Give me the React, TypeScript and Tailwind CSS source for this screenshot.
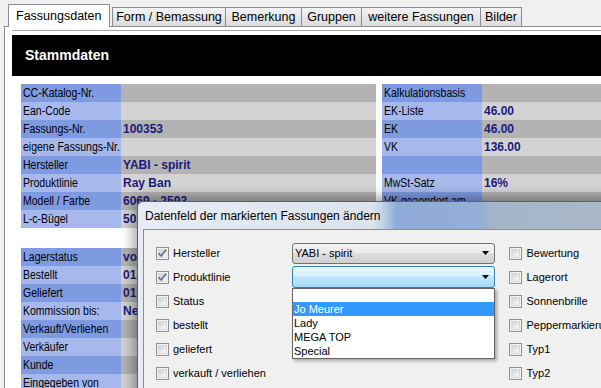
import React from "react";

const tabs = [
  { label: "Form / Bemassung", w: "w-[114px]" },
  { label: "Bemerkung", w: "w-[76px]" },
  { label: "Gruppen", w: "w-[60px]" },
  { label: "weitere Fassungen", w: "w-[119px]" },
  { label: "Bilder", w: "w-[41px]" },
];

const stamm = [
  ["CC-Katalog-Nr.", ""],
  ["Ean-Code", ""],
  ["Fassungs-Nr.", "100353"],
  ["eigene Fassungs-Nr.", ""],
  ["Hersteller", "YABI - spirit"],
  ["Produktlinie", "Ray Ban"],
  ["Modell / Farbe", "6069 - 2593"],
  ["L-c-Bügel", "50 - 20 - 140"],
];

const lager = [
  ["Lagerstatus", "vorrätig"],
  ["Bestellt", "01.10.2007"],
  ["Geliefert", "01.10.2007"],
  ["Kommission bis:", "Nein"],
  ["Verkauft/Verliehen", ""],
  ["Verkäufer", ""],
  ["Kunde", ""],
  ["Eingegeben von", ""],
];

const kalk = [
  ["Kalkulationsbasis", ""],
  ["EK-Liste", "46.00"],
  ["EK", "46.00"],
  ["VK", "136.00"],
  ["", ""],
  ["MwSt-Satz", "16%"],
  ["VK geaendert am", ""],
  ["", ""],
];

function Row({ label, value, dark }: { label: string; value: string; dark: boolean }) {
  return (
    <div className="flex h-[18px]">
      <div
        className={`w-[100px] shrink-0 pl-[2px] flex items-center whitespace-nowrap text-[12.5px] text-black ${
          dark ? "bg-[#7e9ae1]" : "bg-[#a7b9ec]"
        }`}
      >
        <span className="inline-block origin-left scale-x-[0.84]">{label}</span>
      </div>
      <div
        className={`flex-1 pl-[2px] flex items-center whitespace-nowrap overflow-hidden text-[12px] font-bold text-[#1a1a80] ${
          dark ? "bg-[#b3b3b3]" : "bg-[#d3d3d3]"
        }`}
      >
        {value}
      </div>
    </div>
  );
}

function Table({ rows, className }: { rows: string[][]; className: string }) {
  return (
    <div className={className}>
      {rows.map(([l, v], i) => (
        <Row key={i} label={l} value={v} dark={i % 2 === 0} />
      ))}
    </div>
  );
}

function Check({ checked }: { checked?: boolean }) {
  return (
    <span className="w-[13px] h-[13px] shrink-0 border border-[#8e8f8f] bg-[#f4f4f4] flex items-center justify-center">
      <span className="w-[9px] h-[9px] bg-gradient-to-br from-[#d2d2d2] to-[#fafafa] border border-[#d8d8d8] flex items-center justify-center">
        {checked && (
          <svg width="9" height="9" viewBox="0 0 9 9" className="overflow-visible">
            <path d="M0.5 4.2 L3.2 7 L8 0.8" fill="none" stroke="#5a6c9c" strokeWidth="1.6" />
          </svg>
        )}
      </span>
    </span>
  );
}

function Arrow() {
  return (
    <svg width="7" height="4" viewBox="0 0 7 4">
      <path d="M0 0 H7 L3.5 4 Z" fill="#000" />
    </svg>
  );
}

export default function App() {
  return (
    <div className="w-[601px] h-[388px] overflow-hidden relative bg-[#f0f0f0] flex flex-col font-['Liberation_Sans',Arial,sans-serif] text-black">
      {/* Tabs */}
      <div className="h-[26px] shrink-0 flex items-end pl-[8px]">
        <div className="relative z-10 mb-[-1px] h-[23px] w-[102px] bg-white border border-b-0 border-[#898c95] flex items-center pl-[7px] text-[12.5px]">
          Fassungsdaten
        </div>
        {tabs.map((t, i) => (
          <div
            key={t.label}
            className={`${t.w} h-[19px] border-t border-r border-[#898c95] bg-gradient-to-b from-[#f3f3f3] to-[#dcdcdc] flex items-center justify-center text-[12.5px] ${
              i === 0 ? "border-l ml-[2px]" : ""
            }`}
          >
            {t.label}
          </div>
        ))}
      </div>

      {/* Panel */}
      <div className="flex-1 ml-[4px] border-t border-l border-[#898c95] bg-white">
        <div className="mt-[3px] ml-[7px] border-t border-[#a3a3a3] pt-[4px]">
          <div className="h-[41px] bg-black flex items-center pl-[13px] text-white font-bold text-[14px]">
            Stammdaten
          </div>
          <div className="mt-[8px] pl-[9px] flex gap-[6px]">
            <div className="w-[355px] flex flex-col gap-[20px]">
              <Table rows={stamm} className="flex flex-col" />
              <Table rows={lager} className="flex flex-col" />
            </div>
            <Table rows={kalk} className="flex-1 flex flex-col" />
          </div>
        </div>
      </div>

      {/* Dialog */}
      <div className="absolute left-[137px] top-[201px] w-[480px] h-[200px] rounded-tl-[6px] border-t border-l border-[#59636e] shadow-[0_0_14px_3px_rgba(0,0,0,0.4)] bg-[linear-gradient(to_right,#e6ecf2_0%,#dbe3ec_49%,#c4d4e6_51%,#8eaad9_54%,#93aed7_71%,#a3b5c9_74%,#aab9c9_100%)] flex flex-col">
        <div className="h-[27px] shrink-0 flex items-center pl-[7px] text-[12px]">
          Datenfeld der markierten Fassungen ändern
        </div>
        <div className="flex-1 ml-[5px] border-t border-l border-[#8d8d8d] bg-[#f0f0f0] text-[11px]">
          <div className="pl-[12px] pt-[11px] flex">
            <div className="w-[139px] flex flex-col">
              {[
                ["Hersteller", true],
                ["Produktlinie", true],
                ["Status", false],
                ["bestellt", false],
                ["geliefert", false],
                ["verkauft / verliehen", false],
              ].map(([l, c]) => (
                <div key={l as string} className="h-[24px] flex items-center gap-[4px] whitespace-nowrap">
                  <Check checked={c as boolean} />
                  <span>{l as string}</span>
                </div>
              ))}
            </div>
            <div className="w-[207px] flex flex-col">
              <div className="h-[24px] flex items-center">
                <div className="w-full h-[21px] rounded-[3px] border border-[#707070] bg-[linear-gradient(to_bottom,#f2f2f2_0%,#ebebeb_45%,#dddddd_50%,#cfcfcf_100%)] flex items-center justify-between pl-[2px] pr-[5px]">
                  <span>YABI - spirit</span>
                  <Arrow />
                </div>
              </div>
              <div className="h-[24px] flex items-center relative">
                <div className="w-full h-[22px] rounded-[3px] border border-[#3c7fb1] bg-[linear-gradient(to_bottom,#eaf6fd_0%,#d9f0fc_45%,#bee6fd_50%,#a7d9f5_100%)] flex items-center justify-end pr-[5px]">
                  <Arrow />
                </div>
                <div className="absolute left-0 top-[23px] w-full h-[71px] bg-white border border-[#646464] shadow-[2px_2px_3px_rgba(0,0,0,0.3)] flex flex-col z-10">
                  <div className="h-[14px]" />
                  {["Jo Meurer", "Lady", "MEGA TOP", "Special"].map((s, i) => (
                    <div
                      key={s}
                      className={`h-[14px] pl-[1px] flex items-center ${i === 0 ? "bg-[#3399ff] text-white" : ""}`}
                    >
                      {s}
                    </div>
                  ))}
                </div>
              </div>
            </div>
            <div className="ml-[14px] flex flex-col">
              {["Bewertung", "Lagerort", "Sonnenbrille", "Peppermarkierung", "Typ1", "Typ2"].map((l) => (
                <div key={l} className="h-[24px] flex items-center gap-[5px] whitespace-nowrap">
                  <Check />
                  <span>{l}</span>
                </div>
              ))}
            </div>
          </div>
        </div>
      </div>
    </div>
  );
}
